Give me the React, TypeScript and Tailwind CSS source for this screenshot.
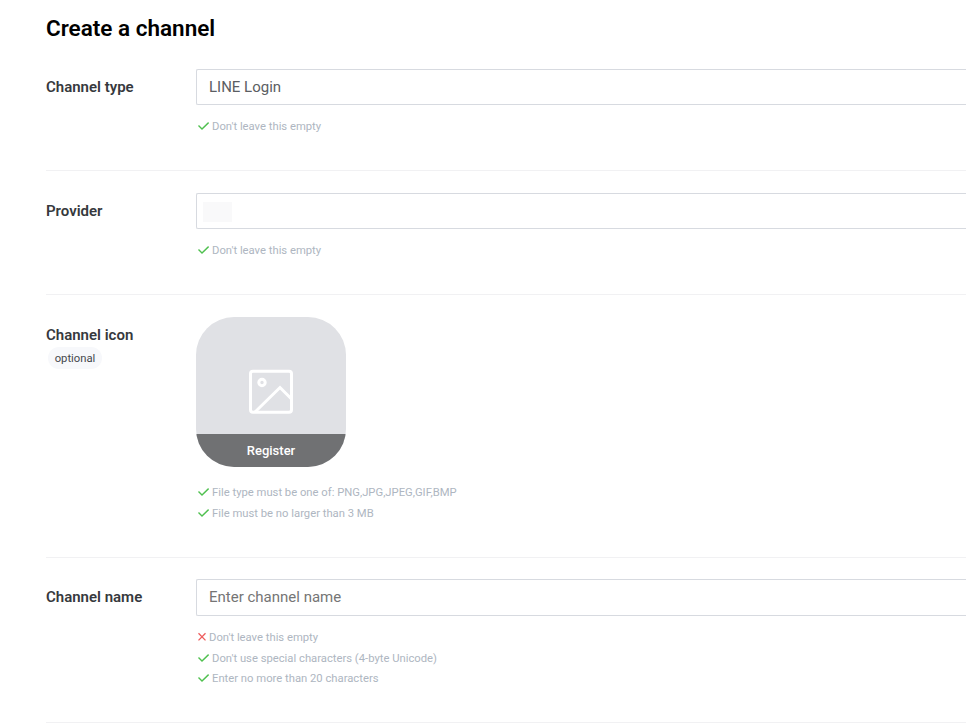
import type { ReactNode } from "react";

function Hint({ ok = true, children }: { ok?: boolean; children: ReactNode }) {
  return (
    <li className="flex h-[20.7px] items-center whitespace-nowrap text-[11.25px] text-[#aeb6c1]">
      {ok ? (
        <svg className="mr-[3px] h-[11px] w-[11px] shrink-0" viewBox="0 0 11 11" fill="none" stroke="#4fc04f" strokeWidth="1.4">
          <path d="M0.5 4.4L4 7.9L10.6 1.6" />
        </svg>
      ) : (
        <svg className="mr-[3px] h-[11px] w-[8px] shrink-0" viewBox="0 0 8 11" fill="none" stroke="#ee5c5c" strokeWidth="1.3">
          <path d="M0.5 1.2L7.5 8.4M7.5 1.2L0.5 8.4" />
        </svg>
      )}
      <span className="pt-[2px]">{children}</span>
    </li>
  );
}

function Label({ children }: { children: ReactNode }) {
  return <div className="text-[15px] font-semibold leading-[18px] text-[#36393d]">{children}</div>;
}

const section = "flex shrink-0 border-b border-[#f1f1f3]";
const labelColumn = "w-[150px] shrink-0";
const field = "flex items-center rounded-l-[2px] border border-r-0 border-[#d7dae0] pl-3 text-[15px] text-[#5b5e63]";
const hints = "pl-[2px]";

export default function App() {
  return (
    <main className="flex h-[728px] w-[966px] flex-col overflow-hidden bg-white pl-[46px] font-['Roboto',sans-serif]">
      <h1 className="h-[47px] shrink-0 pt-[14px] text-[22.5px] font-semibold leading-[28px] text-black">
        <span>Create a channel</span>
      </h1>

      <section className={`${section} h-[124px]`}>
        <div className={`${labelColumn} pt-[31px]`}>
          <Label>Channel type</Label>
        </div>
        <div className="flex-1 pt-[22px]">
          <div className={`${field} h-[36px]`}>LINE Login</div>
          <ul className={`${hints} pt-[11px]`}>
            <Hint>Don't leave this empty</Hint>
          </ul>
        </div>
      </section>

      <section className={`${section} h-[124px]`}>
        <div className={`${labelColumn} pt-[31px]`}>
          <Label>Provider</Label>
        </div>
        <div className="flex-1 pt-[22px]">
          <div className={`${field} h-[36px] !pl-[6px]`}>
            <div className="mt-[2px] h-5 w-[29px] bg-[#f9f9fa]" />
          </div>
          <ul className={`${hints} pt-[11px]`}>
            <Hint>Don't leave this empty</Hint>
          </ul>
        </div>
      </section>

      <section className={`${section} h-[263px]`}>
        <div className={`${labelColumn} pt-[31px]`}>
          <Label>Channel icon</Label>
          <span className="ml-[2px] mt-[3px] flex h-[22px] w-[54px] items-center justify-center rounded-full bg-[#f7f8fb] pt-[2px] text-[11.25px] text-[#45484d]">
            optional
          </span>
        </div>
        <div className="flex-1 pt-[22px]">
          <div className="flex h-[150px] w-[150px] flex-col justify-between overflow-hidden rounded-[38px] bg-[#e0e1e5]">
            <div className="flex justify-center pt-[52px]">
              <svg className="h-[46px] w-[46px]" viewBox="0 0 46 46" fill="none" stroke="white" strokeWidth="3">
                <rect x="2.5" y="2.2" width="41" height="41" rx="2.5" />
                <circle cx="14" cy="13.5" r="3.2" />
                <path d="M7 43L32 18.5L43.5 30" />
              </svg>
            </div>
            <button className="h-[33px] bg-[#707173] text-[13px] font-medium text-white">Register</button>
          </div>
          <ul className={`${hints} pt-[15px]`}>
            <Hint>File type must be one of: PNG,JPG,JPEG,GIF,BMP</Hint>
            <Hint>File must be no larger than 3 MB</Hint>
          </ul>
        </div>
      </section>

      <section className={`${section} h-[165px]`}>
        <div className={`${labelColumn} pt-[30px]`}>
          <Label>Channel name</Label>
        </div>
        <div className="flex-1 pt-[21px]">
          <input
            className={`${field} block h-[37px] w-full bg-white pb-[2px] outline-none placeholder:text-[#757575]`}
            placeholder="Enter channel name"
          />
          <ul className={`${hints} pt-[11px]`}>
            <Hint ok={false}>Don't leave this empty</Hint>
            <Hint>Don't use special characters (4-byte Unicode)</Hint>
            <Hint>Enter no more than 20 characters</Hint>
          </ul>
        </div>
      </section>
    </main>
  );
}
